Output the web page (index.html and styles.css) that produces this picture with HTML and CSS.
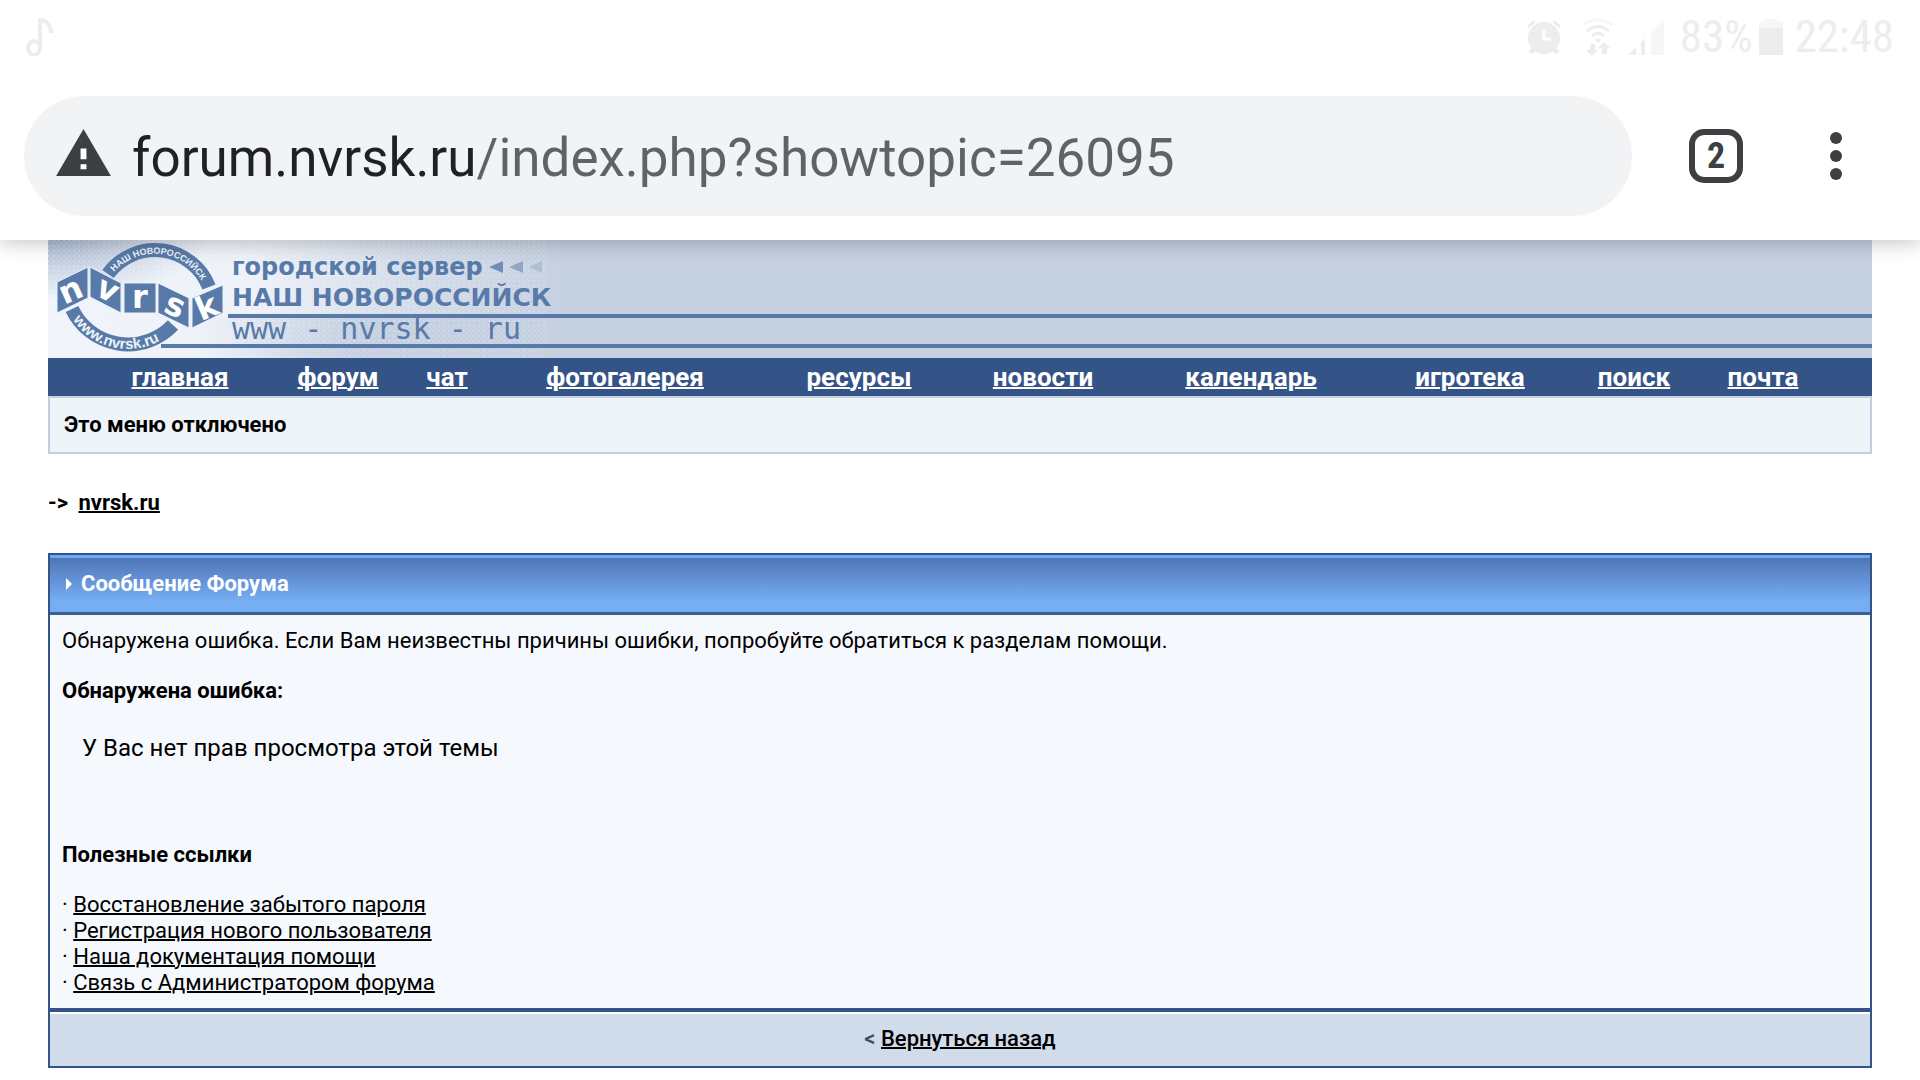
FILE: index.html
```html
<!DOCTYPE html>
<html lang="ru">
<head>
    <meta charset="utf-8">
    <meta name="viewport" content="width=device-width, initial-scale=1">
    <title>Сообщение Форума</title>
    <link rel="stylesheet" href="styles.css">
</head>
<body>
    <header class="browser">
        <div class="status">
            <svg class="note" width="28" height="38" viewBox="0 0 28 38" fill="none" stroke="currentColor" stroke-width="4">
                <ellipse cx="8" cy="30" rx="6" ry="7"/>
                <path d="M14 31V2c7 0 11 6 11 13"/>
            </svg>
            <div class="status-right">
                <svg width="36" height="38" viewBox="0 0 36 38">
                    <path d="M1 8l6-6 3 2-7 6zM35 8l-6-6-3 2 7 6zM5 30l-2 4 3 2 4-3zM31 30l2 4-3 2-4-3z" fill="currentColor"/>
                    <circle cx="18" cy="20" r="16" fill="currentColor"/>
                    <path d="M18 12v9h7" fill="none" stroke="#fff" stroke-width="3"/>
                </svg>
                <svg class="wifi" width="32" height="38" viewBox="0 0 32 38" fill="none" stroke="currentColor" stroke-width="3">
                    <path class="faint" d="M1 7q15-10 30 0"/>
                    <path d="M5 13q11-9 22 0M10 18q6-6 12 0"/>
                    <path d="M13 22q3-3 6 0l-3 3z" fill="currentColor" stroke="none"/>
                    <path d="M8 26h5v6h3l-6 6-6-6h4zM20 36h5v-6h3l-6-6-6 6h4z" fill="currentColor" stroke="none"/>
                </svg>
                <svg class="signal" width="36" height="38" viewBox="0 0 36 38" fill="currentColor">
                    <path d="M0 37l8-8v8zM13 25l4-5v17h-4z"/>
                    <path class="faint" d="M23 14L36 1v36H23z"/>
                </svg>
                <span>83%</span>
                <svg class="battery" width="24" height="38" viewBox="0 0 24 38" fill="currentColor">
                    <path class="faint" d="M6 1h12v3h6v6H0V4h6z"/>
                    <path d="M0 10h24v27H0z"/>
                </svg>
                <span>22:48</span>
            </div>
        </div>
        <div class="toolbar">
            <div class="omnibox">
                <svg class="warning" width="55" height="47" viewBox="0 0 56 48">
                    <path d="M28 0l28 48H0z" fill="#3c4043"/>
                    <path d="M25 20h6v11h-6zM25 36h6v5h-6z" fill="#fff"/>
                </svg>
                <input class="url" type="text" aria-label="Адрес" value="forum.nvrsk.ru/index.php?showtopic=26095">
            </div>
            <button class="tabs" aria-label="Вкладки">2</button>
            <button class="more" aria-label="Меню">
                <svg width="12" height="48" viewBox="0 0 12 48" fill="#3c4043">
                    <circle cx="6" cy="6" r="6"/>
                    <circle cx="6" cy="24" r="6"/>
                    <circle cx="6" cy="42" r="6"/>
                </svg>
            </button>
        </div>
    </header>

    <main class="page">
        <svg class="banner" width="100%" height="118">
            <defs>
                <linearGradient id="light" x1="0" y1="0" x2="1" y2="0">
                    <stop offset="0" stop-color="#f1f4fa"/>
                    <stop offset="0.4" stop-color="#edf1f8"/>
                    <stop offset="0.7" stop-color="#d3dce9"/>
                    <stop offset="1" stop-color="#c5d0e1"/>
                </linearGradient>
                <radialGradient id="corner" cx="0" cy="0" r="1">
                    <stop offset="0" stop-color="#a9b9d2"/>
                    <stop offset="1" stop-color="#a9b9d2" stop-opacity="0"/>
                </radialGradient>
                <linearGradient id="fade" x1="0" y1="0" x2="1" y2="0">
                    <stop offset="0.1" stop-color="#c5d0e1" stop-opacity="0"/>
                    <stop offset="0.5" stop-color="#c5d0e1"/>
                </linearGradient>
                <pattern id="dots" width="5" height="5" patternUnits="userSpaceOnUse">
                    <path d="M0 0h2v2H0zM3 3h1v1H3z" fill="#fff" fill-opacity=".2"/>
                </pattern>
                <path id="arc-top" d="M63 36A54 54 0 0 1 157 48"/>
                <path id="arc-bottom" d="M20 71A66 66 0 0 0 128 88"/>
            </defs>
            <rect width="100%" height="118" fill="#c5d0e1"/>
            <rect width="520" height="118" fill="url(#light)"/>
            <rect x="110" y="78" width="410" height="40" fill="url(#fade)"/>
            <rect width="160" height="60" fill="url(#corner)"/>
            <rect width="500" height="118" fill="url(#dots)"/>

            <g fill="none" stroke="#587aa9" stroke-width="14">
                <path d="M60 34A58 58 0 0 1 161 47"/>
                <path d="M24 69A62 62 0 0 0 125 85"/>
            </g>
            <g class="ring-text">
                <text font-size="9"><textPath href="#arc-top" startOffset="5">НАШ НОВОРОССИЙСК</textPath></text>
                <text font-size="15"><textPath href="#arc-bottom" startOffset="10">www.nvrsk.ru</textPath></text>
            </g>
            <path d="M9 42l31-15v31L9 73zM42 27l31 16v30L42 57zM76 43h32v30H76zM110 43l31 15v30l-31-15zM144 58l31-13v28l-31 15z" fill="#587aa9" stroke="#edf2f8" stroke-width="1"/>
            <g class="cube-text">
                <text transform="translate(27 60) rotate(-24)">n</text>
                <text transform="translate(55 59) rotate(26)">v</text>
                <text transform="translate(92 68)">r</text>
                <text transform="translate(123 75) rotate(24)">s</text>
                <text transform="translate(163 77) rotate(-23)">k</text>
            </g>

            <g class="brand">
                <text x="184" y="35" font-size="24">городской сервер</text>
                <text x="184" y="66" font-size="25">НАШ НОВОРОССИЙСК</text>
                <text class="www" x="184" y="99" font-size="30">www - nvrsk - ru</text>
            </g>
            <g fill="#587aa9">
                <path d="M441 27l14-6v12z" opacity=".8"/>
                <path d="M461 27l14-6v12z" opacity=".5"/>
                <path d="M481 27l13-6v12z" opacity=".25"/>
                <rect x="180" y="74" width="100%" height="4"/>
                <rect x="113" y="104" width="100%" height="4"/>
            </g>
        </svg>

        <nav class="menu">
            <a href="#">главная</a>
            <a href="#">форум</a>
            <a href="#">чат</a>
            <a href="#">фотогалерея</a>
            <a href="#">ресурсы</a>
            <a href="#">новости</a>
            <a href="#">календарь</a>
            <a href="#">игротека</a>
            <a href="#">поиск</a>
            <a href="#">почта</a>
        </nav>
        <div class="submenu">Это меню отключено</div>

        <div class="crumbs">-&gt; <a href="#">nvrsk.ru</a></div>

        <section class="box">
            <h1 class="maintitle">
                <svg width="6" height="12" viewBox="0 0 6 12"><path d="M0 0l6 6-6 6z" fill="#fff"/></svg>
                Сообщение Форума
            </h1>
            <div class="content">
                <p>Обнаружена ошибка. Если Вам неизвестны причины ошибки, попробуйте обратиться к разделам помощи.</p>
                <h2>Обнаружена ошибка:</h2>
                <p class="error">У Вас нет прав просмотра этой темы</p>
                <h2>Полезные ссылки</h2>
                <ul>
                    <li>&middot; <a href="#">Восстановление забытого пароля</a></li>
                    <li>&middot; <a href="#">Регистрация нового пользователя</a></li>
                    <li>&middot; <a href="#">Наша документация помощи</a></li>
                    <li>&middot; <a href="#">Связь с Администратором форума</a></li>
                </ul>
            </div>
            <div class="back">&lt; <a href="#">Вернуться назад</a></div>
        </section>
    </main>
</body>
</html>
```
FILE: styles.css
```css
*
{
    box-sizing: border-box;
}
body
{
    margin: 0;
    background-color: #fff;
    color: #000;
    font-family: Roboto, sans-serif;
    font-size: 22px;
    line-height: 26px;
}
h1, h2, p, ul
{
    margin: 0;
    padding: 0;
    font-size: 22px;
}
svg
{
    display: block;
    flex-shrink: 0;
}
a
{
    color: inherit;
    text-decoration-thickness: 2px;
}

/* browser bar */
.browser
{
    position: relative;
    background-color: #fff;
    box-shadow: 0 2px 20px rgba(0, 0, 0, 0.25);
    padding-bottom: 24px;
}
.status
{
    display: flex;
    justify-content: space-between;
    align-items: center;
    height: 74px;
    padding: 0 26px;
    color: #ededed;
    font-family: "Roboto Condensed", Roboto, sans-serif;
    font-size: 45px;
}
.status-right
{
    display: flex;
    align-items: center;
}
.wifi
{
    margin-left: 20px;
}
.signal
{
    margin: 0 16px 0 14px;
}
.battery
{
    margin: 0 12px 0 6px;
}
.faint
{
    opacity: 0.5;
}
.toolbar
{
    display: flex;
    align-items: center;
    margin-top: 22px;
    padding: 0 78px 0 24px;
}
.omnibox
{
    flex: 1;
    display: flex;
    align-items: center;
    gap: 21px;
    height: 120px;
    padding: 0 32px;
    border-radius: 60px;
    background-color: #f1f3f4;
}
.warning
{
    margin-bottom: 7px;
}
.url
{
    flex: 1;
    min-width: 0;
    padding: 4px 0 0;
    border: 0;
    outline: 0;
    font-family: Roboto, sans-serif;
    font-size: 53px;
    background: linear-gradient(to right, #202124 343px, #5f6368 343px);
    -webkit-background-clip: text;
    background-clip: text;
    -webkit-text-fill-color: transparent;
}
.tabs
{
    width: 54px;
    height: 54px;
    margin-left: 57px;
    padding: 0;
    border: 6px solid #3c4043;
    border-radius: 15px;
    background: none;
    color: #3c4043;
    font-family: "Roboto Condensed", Roboto, sans-serif;
    font-size: 36px;
    font-weight: bold;
    line-height: 42px;
}
.more
{
    margin-left: 87px;
    padding: 0;
    border: 0;
    background: none;
}

/* forum page */
.page
{
    padding: 0 48px 11px;
}
.ring-text
{
    fill: #eef2f8;
    font-family: "Liberation Sans", sans-serif;
    font-weight: bold;
}
.cube-text
{
    fill: #fff;
    font-family: "DejaVu Sans", sans-serif;
    font-size: 32px;
    font-weight: bold;
    text-anchor: middle;
}
.brand
{
    fill: #587aa9;
    font-family: "DejaVu Sans", sans-serif;
    font-weight: bold;
}
.www
{
    font-family: "DejaVu Sans Mono", monospace;
    font-weight: normal;
}
.menu
{
    display: grid;
    grid-template-columns: 164fr 152fr 66fr 290fr 178fr 190fr 226fr 212fr 116fr 142fr;
    height: 38px;
    padding: 0 38px 0 50px;
    background-color: #345487;
    color: #fff;
    font-size: 26px;
    font-weight: bold;
    line-height: 38px;
    text-align: center;
}
.submenu
{
    padding: 14px;
    border: 2px solid #c2cfdf;
    background-color: #eff4f9;
    font-weight: bold;
}
.crumbs
{
    margin: 36px 0 37px;
    font-weight: bold;
}
.crumbs a
{
    margin-left: 5px;
}
.box
{
    border: 2px solid #345487;
}
.maintitle
{
    display: flex;
    align-items: center;
    gap: 9px;
    height: 60px;
    padding: 0 0 2px 16px;
    border-top: 3px solid #6fa6f5;
    border-bottom: 3px solid #3f5f94;
    background: linear-gradient(#4f76b5, #6491d6 40%, #76aef3 80%);
    color: #fff;
}
.content
{
    padding: 13px 12px 12px;
    background-color: #f5f8fd;
}
.content h2
{
    margin: 24px 0;
}
.content .error
{
    padding: 7px 20px;
    margin-bottom: 74px;
    font-size: 24px;
}
.content ul
{
    list-style: none;
}
.back
{
    padding: 14px;
    border-top: 4px solid #345487;
    background-color: #d1dceb;
    box-shadow: inset 0 2px #fff;
    color: #3a4f6c;
    font-weight: 500;
    text-align: center;
}
.back a
{
    color: #000;
}
```
